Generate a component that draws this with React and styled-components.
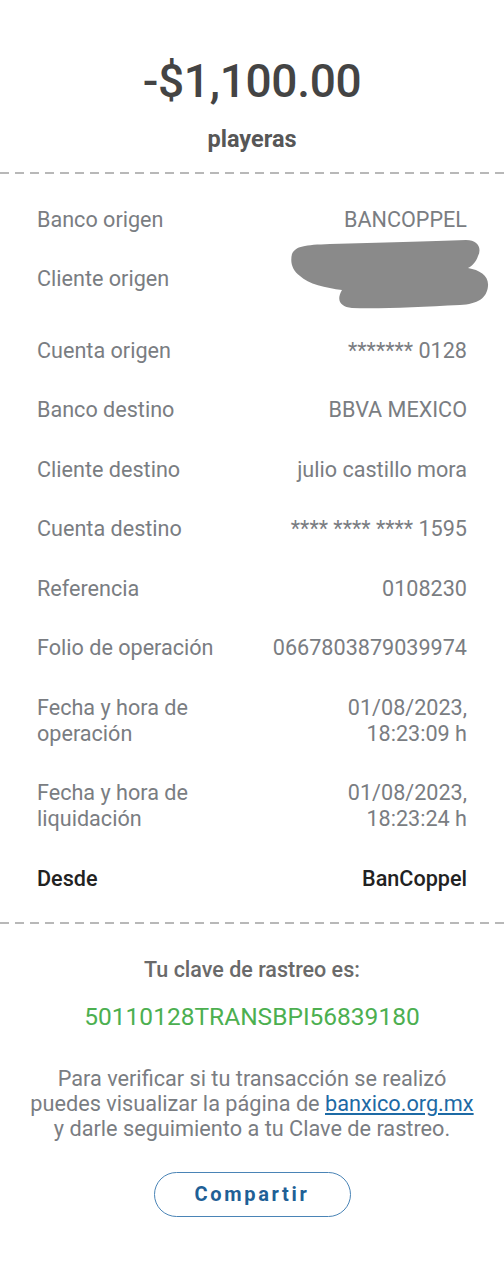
import styled, { createGlobalStyle } from "styled-components";

const GlobalStyle = createGlobalStyle`
  body {
    margin: 0;
    background: #ffffff;
    font-family: Roboto, "Noto Sans", "Liberation Sans", sans-serif;
  }
`;

const Receipt = styled.div`
  width: 504px;
  min-height: 1280px;
  background: #fff;
  display: flex;
  flex-direction: column;
`;

const Header = styled.div`
  display: flex;
  flex-direction: column;
  align-items: center;
  padding: 54px 0 19px;
`;

const Amount = styled.div`
  font-size: 46px;
  line-height: 54px;
  color: #444;
  font-weight: 500;
  letter-spacing: -0.3px;
`;

const Concept = styled.div`
  margin-top: 17px;
  font-size: 23.5px;
  line-height: 28px;
  font-weight: 700;
  color: #575757;
`;

const Dashed = styled.div`
  height: 2px;
  background-image: repeating-linear-gradient(
    to right,
    #b8b8b8 0,
    #b8b8b8 9px,
    transparent 9px,
    transparent 15px
  );
`;

const DetailList = styled.div`
  display: flex;
  flex-direction: column;
  padding: 16px 37px 13px;
`;

const Row = styled.div`
  display: flex;
  justify-content: space-between;
  align-items: flex-start;
  padding: 16.75px 0;
  font-size: 21.6px;
  line-height: 26px;
  color: ${(p) => (p.$strong ? "#222" : "#7a7d82")};
  font-weight: ${(p) => (p.$strong ? 500 : 400)};
`;

const Label = styled.div`
  max-width: 220px;
`;

const Value = styled.div`
  text-align: right;
  max-width: 240px;
  position: relative;
  height: ${(p) => (p.$h ? `${p.$h}px` : "auto")};
`;

const Redaction = styled.svg`
  position: absolute;
  right: -23px;
  top: -26px;
`;

const Tracking = styled.div`
  display: flex;
  flex-direction: column;
  align-items: center;
  padding-top: 33px;
`;

const TrackTitle = styled.div`
  font-size: 21.5px;
  line-height: 26px;
  font-weight: 500;
  color: #6a6a6a;
`;

const TrackCode = styled.div`
  margin-top: 21px;
  font-size: 24.5px;
  line-height: 26px;
  color: #4caf50;
`;

const Info = styled.p`
  margin: 36px 0 0;
  text-align: center;
  font-size: 21.7px;
  line-height: 25px;
  color: #7a7d82;
`;

const InfoLink = styled.a`
  color: #1d6aa5;
  text-decoration: underline;
`;

const ShareButton = styled.button`
  margin-top: 31px;
  width: 197px;
  height: 45px;
  border-radius: 23px;
  border: 1.25px solid #4a84b6;
  background: #fff;
  color: #1f6096;
  font-family: inherit;
  font-size: 20px;
  font-weight: 700;
  letter-spacing: 2.7px;
  cursor: pointer;
`;

const details = [
  { label: "Banco origen", value: "BANCOPPEL" },
  { label: "Cliente origen", redacted: true },
  { label: "Cuenta origen", value: "******* 0128" },
  { label: "Banco destino", value: "BBVA MEXICO" },
  { label: "Cliente destino", value: "julio castillo mora" },
  { label: "Cuenta destino", value: "**** **** **** 1595" },
  { label: "Referencia", value: "0108230" },
  { label: "Folio de operación", value: "0667803879039974" },
  { label: "Fecha y hora de operación", value: ["01/08/2023,", "18:23:09 h"] },
  { label: "Fecha y hora de liquidación", value: ["01/08/2023,", "18:23:24 h"] },
];

function Scribble() {
  return (
    <Redaction width="200" height="70" viewBox="0 0 200 70">
      <path
        d="M2 14 C6 6 14 5 40 4 C90 3 140 1 176 0 C188 0 192 8 188 16 C186 22 182 26 178 28 C190 30 199 36 198 46 C197 58 188 64 170 65 C130 67 90 69 62 68 C50 67 46 60 52 50 C36 48 18 44 10 36 C2 30 0 22 2 14 Z"
        fill="#8a8a8a"
      />
    </Redaction>
  );
}

export default function App() {
  return (
    <>
      <GlobalStyle />
      <Receipt>
        <Header>
          <Amount>-$1,100.00</Amount>
          <Concept>playeras</Concept>
        </Header>
        <Dashed />
        <DetailList>
          {details.map((d) => (
            <Row key={d.label}>
              <Label>{d.label}</Label>
              {d.redacted ? (
                <Value $h={38}>
                  <Scribble />
                </Value>
              ) : (
                <Value>
                  {Array.isArray(d.value)
                    ? d.value.map((line) => <div key={line}>{line}</div>)
                    : d.value}
                </Value>
              )}
            </Row>
          ))}
          <Row $strong>
            <Label>Desde</Label>
            <Value>BanCoppel</Value>
          </Row>
        </DetailList>
        <Dashed />
        <Tracking>
          <TrackTitle>Tu clave de rastreo es:</TrackTitle>
          <TrackCode>50110128TRANSBPI56839180</TrackCode>
          <Info>
            Para verificar si tu transacción se realizó
            <br />
            puedes visualizar la página de <InfoLink href="#">banxico.org.mx</InfoLink>
            <br />
            y darle seguimiento a tu Clave de rastreo.
          </Info>
          <ShareButton>Compartir</ShareButton>
        </Tracking>
      </Receipt>
    </>
  );
}
